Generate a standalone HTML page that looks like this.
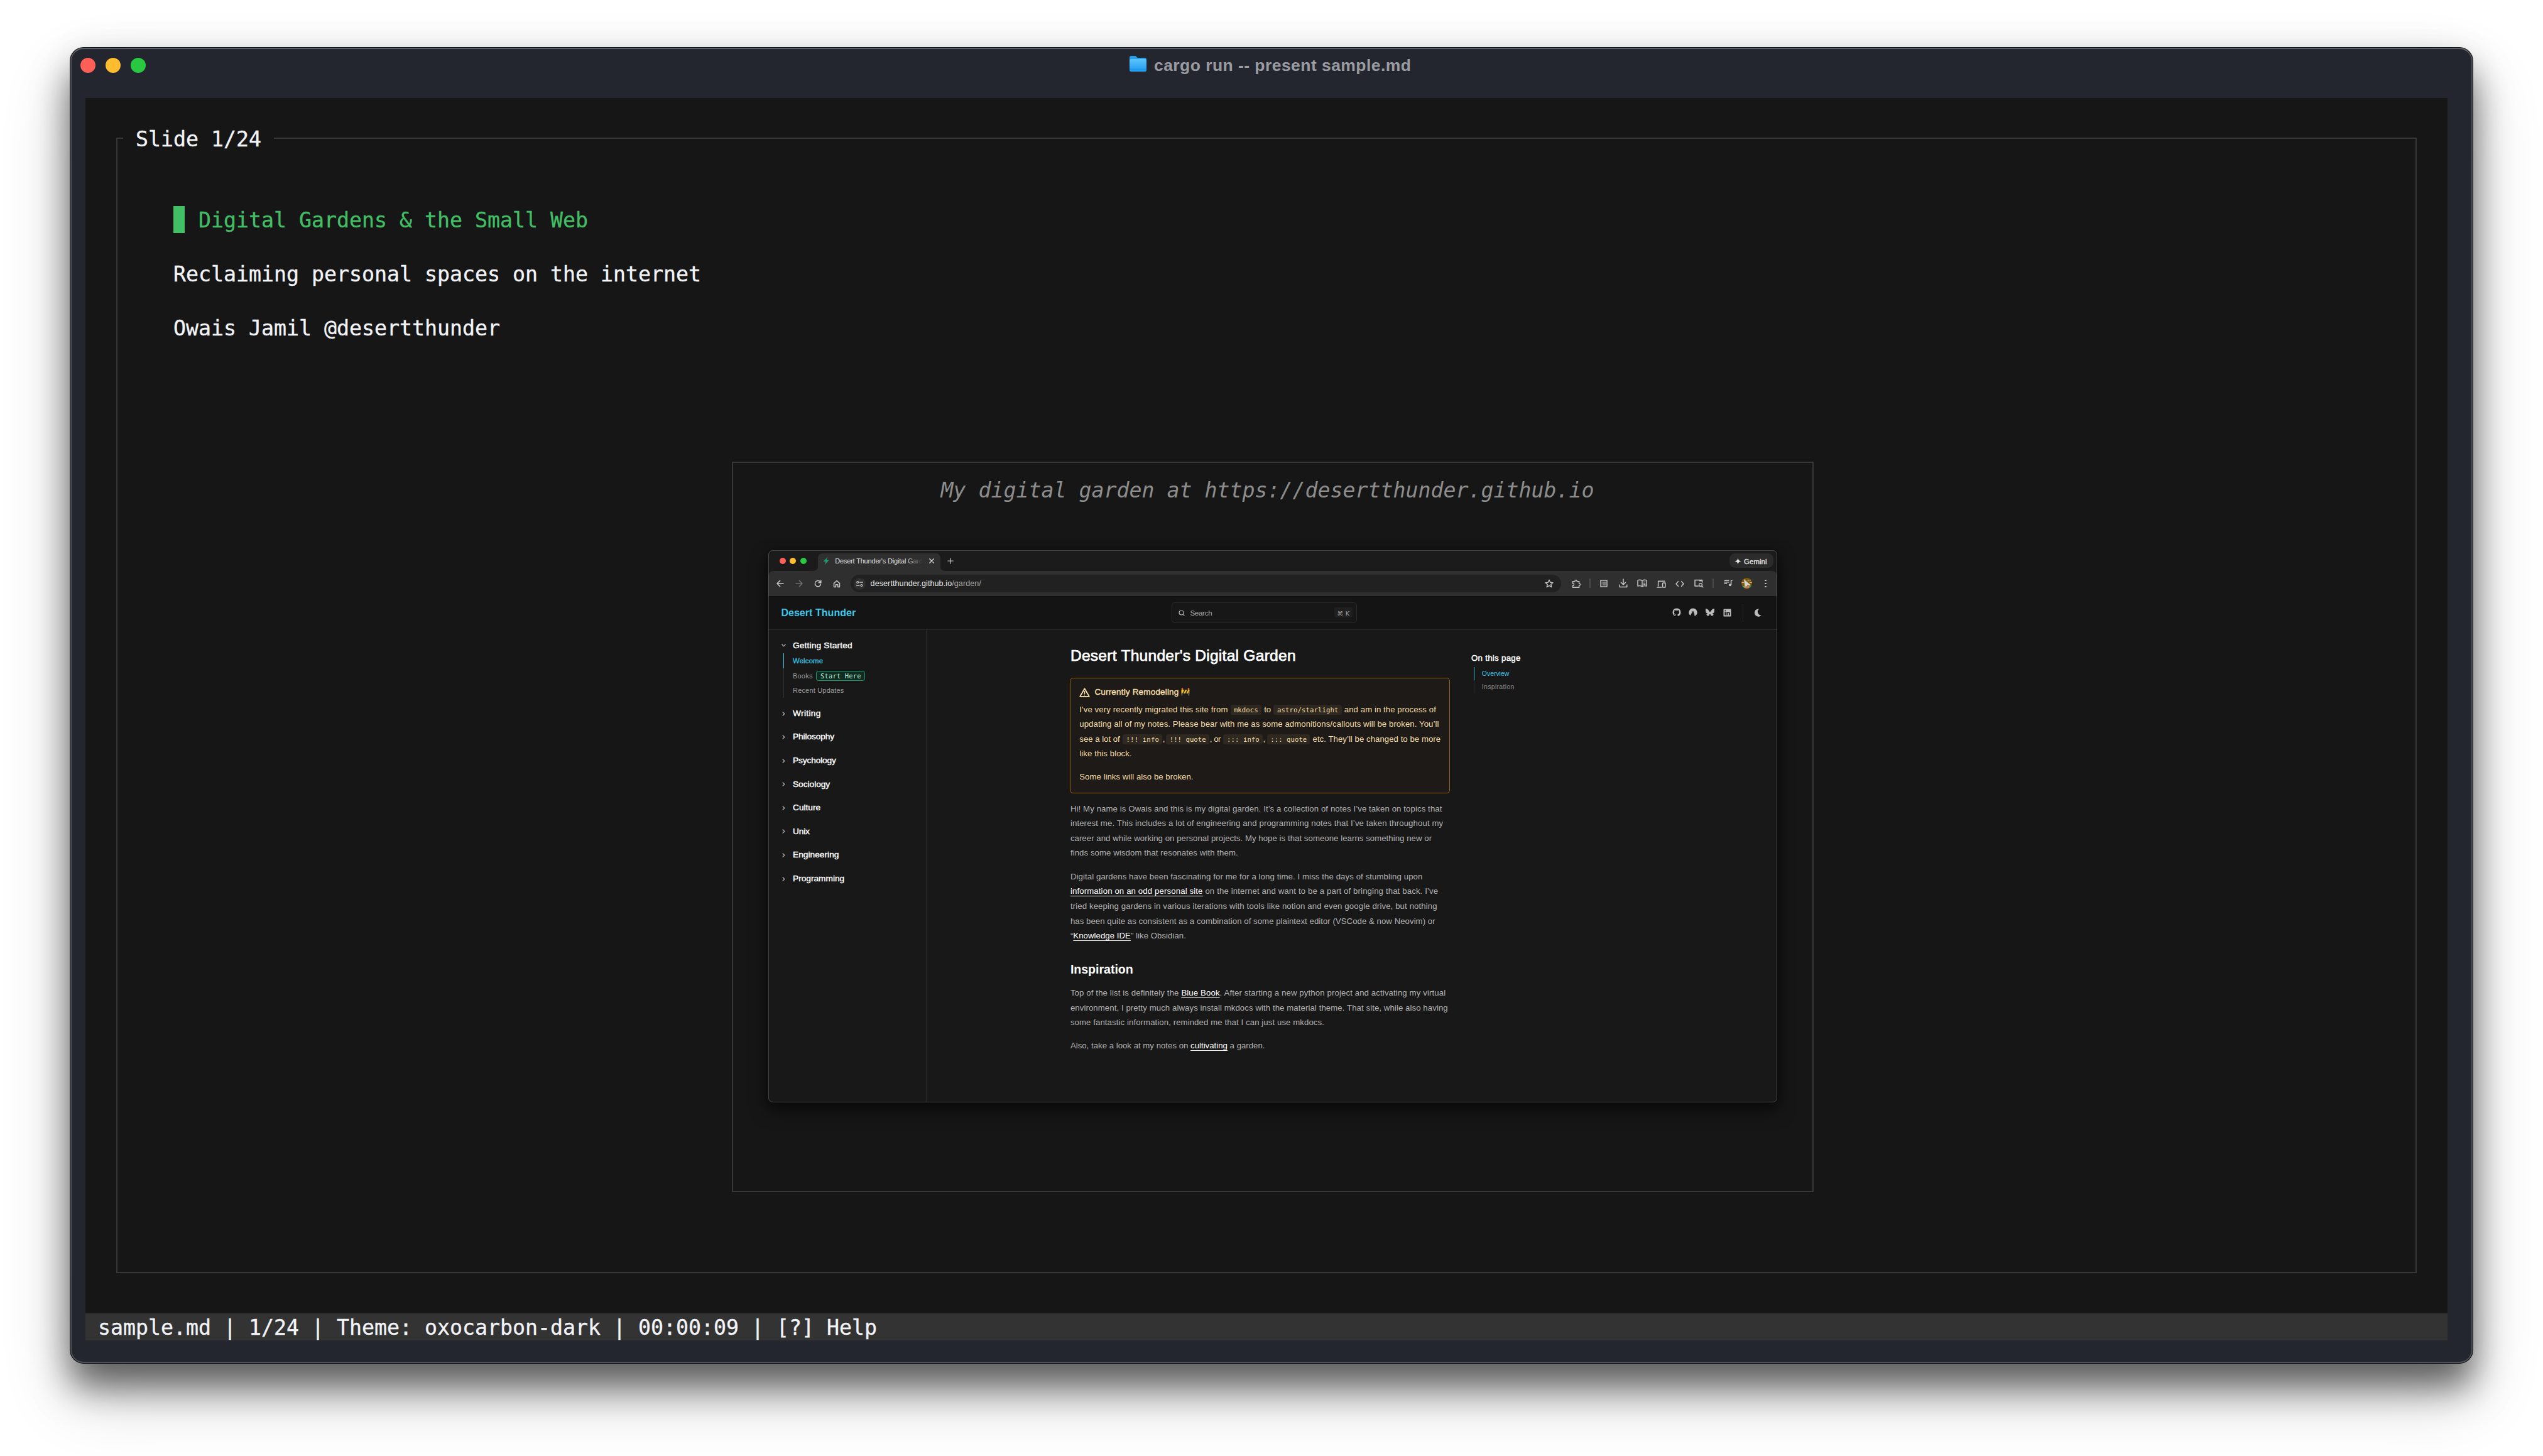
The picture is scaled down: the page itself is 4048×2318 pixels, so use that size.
<!DOCTYPE html>
<html lang="en"><head><meta charset="utf-8"><title>cargo run -- present sample.md</title>
<style>
html,body{margin:0;padding:0}
body{width:4048px;height:2318px;background:#fff;position:relative;overflow:hidden}
.m{position:absolute;font:400 33.22px/43px "DejaVu Sans Mono","Liberation Mono",monospace;white-space:pre;height:43px;margin-top:1px;-webkit-text-stroke:.35px currentColor}
.f{position:absolute;white-space:pre}
.a{position:absolute}
svg{position:absolute;overflow:visible}
</style></head><body>
<div class="a" style="left:112px;top:76px;width:3824px;height:2094px;border-radius:21px;background:#24262f;box-shadow:0 38px 56px rgba(0,0,0,.55),0 50px 110px rgba(0,0,0,.2),0 0 0 1px rgba(0,0,0,.95),0 0 60px rgba(0,0,0,.05);"></div>
<div class="a" style="left:112px;top:76px;width:3824px;height:2094px;border-radius:21px;box-sizing:border-box;border:2px solid rgba(255,255,255,.27);border-bottom-color:rgba(255,255,255,.2);border-left-color:rgba(255,255,255,.2);border-right-color:rgba(255,255,255,.2)"></div>
<div class="a" style="left:128px;top:92px;width:24px;height:24px;border-radius:50%;background:#fe5f57"></div>
<div class="a" style="left:168px;top:92px;width:24px;height:24px;border-radius:50%;background:#febc2e"></div>
<div class="a" style="left:208px;top:92px;width:24px;height:24px;border-radius:50%;background:#28c840"></div>
<svg style="left:1797px;top:88px" width="29" height="27" viewBox="0 0 29 27">
<defs><linearGradient id="fg" x1="0" y1="0" x2="0" y2="1"><stop offset="0" stop-color="#5cc4fb"/><stop offset="1" stop-color="#1e9bf0"/></linearGradient></defs>
<path d="M1 3.5Q1 1 3.5 1H9.5Q11 1 12 2.2L13.6 4H25.5Q28 4 28 6.5V9H1Z" fill="#2a9de8"/>
<rect x="1" y="6" width="27" height="20" rx="2.5" fill="url(#fg)"/>
<rect x="1" y="21.6" width="27" height="1" fill="#1787d6" opacity=".6"/>
</svg>
<div class="f" style="left:1837px;top:87.52px;font:700 26.5px/32px 'Liberation Sans',sans-serif;color:#9a9ba1;letter-spacing:0.444px;">cargo run -- present sample.md</div>
<div style="position:absolute;left:136px;top:156px;width:3760px;height:1978px;background:#161616;"></div>
<div style="position:absolute;left:185px;top:219px;width:2px;height:1808px;background:#373737;"></div>
<div style="position:absolute;left:3845px;top:219px;width:2px;height:1808px;background:#373737;"></div>
<div style="position:absolute;left:185px;top:2025px;width:3662px;height:2px;background:#373737;"></div>
<div style="position:absolute;left:185px;top:219px;width:11px;height:2px;background:#373737;"></div>
<div style="position:absolute;left:436px;top:219px;width:3411px;height:2px;background:#373737;"></div>
<div class="m" style="left:216px;top:199px;color:#f2f4f8;">Slide 1/24</div>
<div style="position:absolute;left:276px;top:328px;width:18px;height:43px;background:#42be65;"></div>
<div class="m" style="left:316px;top:328px;color:#42be65;">Digital Gardens &amp; the Small Web</div>
<div class="m" style="left:276px;top:414px;color:#f2f4f8;">Reclaiming personal spaces on the internet</div>
<div class="m" style="left:276px;top:500px;color:#f2f4f8;">Owais Jamil @desertthunder</div>
<div style="position:absolute;left:1165px;top:735px;width:1722px;height:2px;background:#373737;"></div>
<div style="position:absolute;left:1165px;top:1896px;width:1722px;height:2px;background:#373737;"></div>
<div style="position:absolute;left:1165px;top:735px;width:2px;height:1163px;background:#373737;"></div>
<div style="position:absolute;left:2885px;top:735px;width:2px;height:1163px;background:#373737;"></div>
<div class="m" style="left:1496px;top:758px;color:#8d8d8d;font-style:italic;-webkit-text-stroke:0;margin-left:1.5px">My digital garden at https://desertthunder.github.io</div>
<div style="position:absolute;left:136px;top:2091px;width:3760px;height:43px;background:#333333;"></div>
<div class="m" style="left:156px;top:2091px;color:#f2f4f8;">sample.md | 1/24 | Theme: oxocarbon-dark | 00:00:09 | [?] Help</div>
<div class="a" style="left:1223px;top:876px;width:1606px;height:879px;border-radius:7px;background:#181818;box-shadow:0 12px 28px rgba(0,0,0,.55),0 0 14px rgba(0,0,0,.35);overflow:hidden">
</div>
<div class="a" style="left:1223px;top:876px;width:1606px;height:879px;border-radius:7px;overflow:hidden">
<div class="a" style="left:0.0px;top:0.0px;width:1606.0px;height:34.0px;background:#1b1b1b;"></div>
<div class="a" style="left:0.0px;top:33.0px;width:1606.0px;height:40.0px;background:#2f2f2f;border-radius:8px 8px 0 0"></div>
<div class="a" style="left:0.0px;top:73.0px;width:1606.0px;height:53.0px;background:#141414;"></div>
<div class="a" style="left:0.0px;top:126.0px;width:1606.0px;height:1.0px;background:#2c2c2c;"></div>
<div class="a" style="left:251.0px;top:127.0px;width:1.0px;height:751.0px;background:#2a2a2a;"></div>
<div class="a" style="left:79.0px;top:5.0px;width:195.0px;height:29.0px;background:#2f2f2f;border-radius:7px 7px 0 0"></div>
<svg style="left:71px;top:25px" width="8" height="8" viewBox="0 0 8 8"><path d="M8 0V8H0Q8 8 8 0Z" fill="#2f2f2f"/></svg>
<svg style="left:274px;top:25px" width="8" height="8" viewBox="0 0 8 8"><path d="M0 0V8H8Q0 8 0 0Z" fill="#2f2f2f"/></svg>
<div class="a" style="left:17.8px;top:12.0px;width:10.0px;height:10.0px;background:#fe5f57;border-radius:50%"></div>
<div class="a" style="left:34.4px;top:12.0px;width:10.0px;height:10.0px;background:#febc2e;border-radius:50%"></div>
<div class="a" style="left:51.0px;top:12.0px;width:10.0px;height:10.0px;background:#28c840;border-radius:50%"></div>
<div class="a" style="left:131.0px;top:39.0px;width:1131.0px;height:28.0px;background:#212121;border-radius:14px"></div>
<div class="a" style="left:136.0px;top:43.5px;width:19.0px;height:19.0px;background:#2f2f2f;border-radius:50%"></div>
<div class="a" style="left:1530.0px;top:5.0px;width:70.0px;height:23.0px;background:#2b2b2b;border-radius:9px"></div>
<div class="a" style="left:642.0px;top:83.0px;width:295.0px;height:33.0px;background:#171717;border-radius:5px;box-sizing:border-box;border:1px solid #2b2b2b"></div>
<div class="a" style="left:901.0px;top:91.0px;width:28.5px;height:16.0px;background:#202020;border-radius:3px"></div>
<div class="a" style="left:1551.0px;top:85.0px;width:1.0px;height:29.0px;background:#2c2c2c;"></div>
<div class="a" style="left:24.0px;top:164.0px;width:1.0px;height:71.0px;background:#333;"></div>
<div class="a" style="left:23.5px;top:164.0px;width:1.5px;height:24.0px;background:#3ec6e8;"></div>
<div class="a" style="left:76.2px;top:192.0px;width:77.6px;height:15.8px;background:#0f2a21;border-radius:3.5px;box-sizing:border-box;border:1px solid #1f9d70"></div>
<div class="a" style="left:1123.0px;top:185.5px;width:1.0px;height:42.0px;background:#2c2c2c;"></div>
<div class="a" style="left:1122.6px;top:185.5px;width:1.4px;height:21.5px;background:#3ec6e8;"></div>
<div class="a" style="left:480.0px;top:203.0px;width:605.0px;height:183.5px;background:#1d1a17;border-radius:5px;box-sizing:border-box;border:1px solid #966309"></div>
<div class="a" style="left:735.9px;top:245.6px;width:49.1px;height:16.2px;background:#2e2820;border-radius:3.5px"></div>
<div class="a" style="left:804.3px;top:245.6px;width:108.3px;height:16.2px;background:#2e2820;border-radius:3.5px"></div>
<div class="a" style="left:564.0px;top:292.7px;width:62.9px;height:16.2px;background:#2e2820;border-radius:3.5px"></div>
<div class="a" style="left:633.2px;top:292.7px;width:68.7px;height:16.2px;background:#2e2820;border-radius:3.5px"></div>
<div class="a" style="left:724.3px;top:292.7px;width:62.4px;height:16.2px;background:#2e2820;border-radius:3.5px"></div>
<div class="a" style="left:793.5px;top:292.7px;width:68.7px;height:16.2px;background:#2e2820;border-radius:3.5px"></div>
</div>
<svg style="left:1309.0px;top:886.0px" width="12" height="14" viewBox="0 0 12 14" ><path d="M8.5 0.5L1.5 8H5.5L3.5 13.5L10.5 6H6.5Z" fill="#1c9c6b"/></svg>
<svg style="left:1479.2px;top:889.0px" width="8" height="8" viewBox="0 0 8 8" ><path d="M0.8 0.8L7.2 7.2M7.2 0.8L0.8 7.2" fill="none" stroke="#dcdcdc" stroke-width="1.3" stroke-linecap="round" stroke-linejoin="round"/></svg>
<svg style="left:1508.4px;top:888.0px" width="10" height="10" viewBox="0 0 10 10" ><path d="M5 0.8V9.2M0.8 5H9.2" fill="none" stroke="#d0d0d0" stroke-width="1.15" stroke-linecap="round" stroke-linejoin="round"/></svg>
<svg style="left:2760.5px;top:887.5px" width="11" height="11" viewBox="0 0 11 11" ><path d="M5.5 0Q5.8 5.2 11 5.5Q5.8 5.8 5.5 11Q5.2 5.8 0 5.5Q5.2 5.2 5.5 0Z" fill="#e6e6e6"/></svg>
<svg style="left:1235.9px;top:923.0px" width="12" height="12" viewBox="0 0 12 12" ><path d="M11 6H1.2M5.6 1.4L1 6L5.6 10.6" fill="none" stroke="#c7c7c7" stroke-width="1.5" stroke-linecap="round" stroke-linejoin="round"/></svg>
<svg style="left:1265.9px;top:923.0px" width="12" height="12" viewBox="0 0 12 12" ><path d="M1 6H10.8M6.4 1.4L11 6L6.4 10.6" fill="none" stroke="#6e6e6e" stroke-width="1.5" stroke-linecap="round" stroke-linejoin="round"/></svg>
<svg style="left:1295.9px;top:923.0px" width="12" height="12" viewBox="0 0 12 12" ><path d="M10.3 4.2A4.7 4.7 0 1 0 10.7 6.5" fill="none" stroke="#c7c7c7" stroke-width="1.5" stroke-linecap="round" stroke-linejoin="round"/><path d="M10.8 1V4.6H7.2" fill="none" stroke="#c7c7c7" stroke-width="1.5" stroke-linecap="round" stroke-linejoin="round"/></svg>
<svg style="left:1325.9px;top:922.5px" width="12" height="13" viewBox="0 0 12 13" ><path d="M1.5 5.6L6 1.5L10.5 5.6V11.5H7.6V7.8H4.4V11.5H1.5Z" fill="none" stroke="#c7c7c7" stroke-width="1.5" stroke-linecap="round" stroke-linejoin="round"/></svg>
<svg style="left:1362.9px;top:924.5px" width="11" height="9" viewBox="0 0 11 9" ><circle cx="2.2" cy="2" r="1.5" fill="none" stroke="#c7c7c7" stroke-width="1.2" stroke-linecap="round" stroke-linejoin="round"/><path d="M5.6 2H10.4M0.6 7H5" fill="none" stroke="#c7c7c7" stroke-width="1.3" stroke-linecap="round" stroke-linejoin="round"/><circle cx="8.4" cy="7" r="1.5" fill="none" stroke="#c7c7c7" stroke-width="1.2" stroke-linecap="round" stroke-linejoin="round"/></svg>
<svg style="left:2458.9px;top:921.5px" width="14" height="14" viewBox="0 0 14 14" ><path d="M7 1.2L8.8 5.2L13 5.6L9.8 8.5L10.8 12.7L7 10.4L3.2 12.7L4.2 8.5L1 5.6L5.2 5.2Z" fill="none" stroke="#c7c7c7" stroke-width="1.4" stroke-linecap="round" stroke-linejoin="round"/></svg>
<svg style="left:2501.6px;top:921.9px" width="14" height="14" viewBox="0 0 14 14" ><path d="M1.6 3.6H5Q4.9 1.4 6.6 1.4Q8.3 1.4 8.2 3.6H11.6V7Q13.4 6.9 13.4 8.5Q13.4 10.1 11.6 10V13.2H1.6V10.2Q3.5 10.3 3.5 8.6Q3.5 6.9 1.6 7Z" fill="none" stroke="#c7c7c7" stroke-width="1.4" stroke-linejoin="miter"/></svg>
<div class="a" style="left:2530px;top:921px;width:1.6px;height:15px;background:#4a4a4a"></div>
<svg style="left:2547.4px;top:922.9px" width="12" height="12" viewBox="0 0 12 12" ><rect x="1" y="1" width="10" height="10" fill="none" stroke="#c7c7c7" stroke-width="1.4"/><path d="M5.4 3.8H9M5.4 6H9M5.4 8.2H9" fill="none" stroke="#c7c7c7" stroke-width="1.2" stroke-linecap="round" stroke-linejoin="round"/><path d="M3 3.8H3.6M3 6H3.6M3 8.2H3.6" fill="none" stroke="#c7c7c7" stroke-width="1.2" stroke-linecap="round" stroke-linejoin="round"/></svg>
<svg style="left:2576.5px;top:921.2px" width="14" height="15" viewBox="0 0 14 15" ><path d="M7 1V9.6M3.4 6.2L7 9.8L10.6 6.2M1.2 10.2V13.6H12.8V10.2" fill="none" stroke="#c7c7c7" stroke-width="1.5" stroke-linecap="round" stroke-linejoin="round"/></svg>
<svg style="left:2606.0px;top:922.2px" width="16" height="13" viewBox="0 0 16 13" ><path d="M8 2.2Q5 0.6 1 1.6V11Q5 10 8 11.8Q11 10 15 11V1.6Q11 0.6 8 2.2ZM8 2.2V11.6" fill="none" stroke="#c7c7c7" stroke-width="1.4" stroke-linecap="round" stroke-linejoin="round"/><path d="M10.2 4.4H13M10.2 6.4H13M10.2 8.4H13" fill="none" stroke="#c7c7c7" stroke-width="1" stroke-linecap="round" stroke-linejoin="round"/></svg>
<svg style="left:2636.5px;top:923.5px" width="15" height="12" viewBox="0 0 15 12" ><path d="M2.6 9V1.2H13M0.8 11H8" fill="none" stroke="#c7c7c7" stroke-width="1.5" stroke-linecap="round" stroke-linejoin="round"/><rect x="9.6" y="4" width="4.4" height="7" rx="0.6" fill="none" stroke="#c7c7c7" stroke-width="1.4" stroke-linecap="round" stroke-linejoin="round"/></svg>
<svg style="left:2667.4px;top:924.5px" width="14" height="9" viewBox="0 0 14 9" ><path d="M4.4 0.8L1 4.5L4.4 8.2M9.6 0.8L13 4.5L9.6 8.2" fill="none" stroke="#c7c7c7" stroke-width="1.5" stroke-linecap="round" stroke-linejoin="round"/></svg>
<svg style="left:2697.1px;top:922.0px" width="15" height="14" viewBox="0 0 15 14" ><path d="M6.4 11H1V1.4H12.6V5" fill="none" stroke="#c7c7c7" stroke-width="1.5" stroke-linecap="round" stroke-linejoin="round"/><path d="M8 1.2H12.8V3.4H8Z" fill="#c7c7c7"/><circle cx="10" cy="9" r="2.4" fill="none" stroke="#c7c7c7" stroke-width="1.4" stroke-linecap="round" stroke-linejoin="round"/><path d="M11.8 10.8L13.8 12.8" fill="none" stroke="#c7c7c7" stroke-width="1.5" stroke-linecap="round" stroke-linejoin="round"/></svg>
<div class="a" style="left:2726.3px;top:921px;width:1.6px;height:15px;background:#4a4a4a"></div>
<svg style="left:2743.5px;top:923.4px" width="14" height="11" viewBox="0 0 14 11" ><path d="M0.6 1.2H8.4M0.6 3.7H8.4M0.6 6.2H5.2" fill="none" stroke="#c7c7c7" stroke-width="1.5"/><path d="M11.6 8V1H13.8" fill="none" stroke="#c7c7c7" stroke-width="1.5"/><circle cx="10" cy="8.2" r="2" fill="#c7c7c7"/></svg>
<svg style="left:2772.0px;top:920.1px" width="17" height="17" viewBox="0 0 17 17" ><defs><clipPath id="av"><circle cx="8.5" cy="8.5" r="8.5"/></clipPath></defs><g clip-path="url(#av)"><rect width="17" height="17" fill="#7a5a02"/><path d="M0 13H5V17H0ZM11 13.6H17V17H11Z" fill="#16b08a"/><rect x="4.6" y="13" width="7.6" height="4" fill="#e8742c"/><path d="M4.1 2L14.8 11.4L12.6 12.6L9.6 11.2L9 13.4H5.4Z" fill="#d2d2d2"/><rect x="7.2" y="13.6" width="2" height="1.4" fill="#1a8fe0"/><path d="M0.3 7H4.2V8H0.3ZM13 7H17V8H13ZM12 3.4H15V4.3H12Z" fill="#f2a3ac"/><rect x="10" y="3.2" width="1.2" height="2" fill="#fff"/></g></svg>
<div class="a" style="left:2809.3px;top:922.5px;width:2.4px;height:2.4px;border-radius:50%;background:#c7c7c7"></div>
<div class="a" style="left:2809.3px;top:927.5px;width:2.4px;height:2.4px;border-radius:50%;background:#c7c7c7"></div>
<div class="a" style="left:2809.3px;top:932.5px;width:2.4px;height:2.4px;border-radius:50%;background:#c7c7c7"></div>
<svg style="left:2661.5px;top:968.4px" width="14" height="14" viewBox="0 0 14 14" ><path d="M7 0.6A6.4 6.4 0 0 0 5 13.1C5.3 13.1 5.4 12.9 5.4 12.7V11.6C3.6 12 3.2 10.8 3.2 10.8C2.9 10.1 2.5 9.9 2.5 9.9C1.9 9.5 2.6 9.5 2.6 9.5C3.2 9.6 3.5 10.2 3.5 10.2C4.1 11.1 5 10.9 5.4 10.7C5.5 10.3 5.6 10 5.8 9.9C4.4 9.7 2.9 9.2 2.9 6.7C2.9 6 3.1 5.5 3.5 5C3.5 4.9 3.2 4.2 3.6 3.3C3.6 3.3 4.1 3.1 5.4 4A6 6 0 0 1 8.600000000000001 4C9.9 3.1 10.4 3.3 10.4 3.3C10.8 4.2 10.5 4.9 10.5 5C10.9 5.5 11.1 6 11.1 6.700000000000001C11.1 9.2 9.6 9.7 8.2 9.9C8.4 10.1 8.6 10.5 8.6 11V12.7C8.6 12.9 8.7 13.1 9 13.1A6.4 6.4 0 0 0 7 0.6Z" fill="#bdbdbd"/></svg>
<svg style="left:2688.4px;top:968.4px" width="14" height="14" viewBox="0 0 14 14" ><path d="M7 0.4A6.6 6.6 0 0 1 11.3 12L7 4.2L2.7 12A6.6 6.6 0 0 1 7 0.4Z" fill="#bdbdbd"/><path d="M7.6 4.6L11.6 11.8L9.6 13.2Z" fill="#bdbdbd" opacity=".75"/></svg>
<svg style="left:2715.2px;top:969.4px" width="14" height="12" viewBox="0 0 14 12" ><path d="M3.1 0.9C4.7 2.1 6.4 4.5 7 5.8C7.6 4.5 9.3 2.1 10.9 0.9C12.1 0 14 -0.6 14 1.5C14 1.9 13.8 5.1 13.6 5.6C13.2 7.200000000000001 11.6 7.6 10.2 7.4C12.7 7.8 13.3 9.2 11.9 10.6C9.3 13.2 8.200000000000001 9.9 7.9 9.1C7.8 8.9 7.8 8.9 7 8.9C6.2 8.9 6.2 8.9 6.1 9.1C5.8 9.9 4.7 13.2 2.1 10.6C0.7 9.2 1.3 7.8 3.8 7.4C2.4 7.6 0.8 7.2 0.4 5.6C0.2 5.1 0 1.9 0 1.5C0 -0.6 1.9 0 3.1 0.9Z" fill="#bdbdbd"/></svg>
<svg style="left:2742.8px;top:968.9px" width="13" height="13" viewBox="0 0 13 13" ><path d="M1.2 0.5H11.8Q12.5 0.5 12.5 1.2V11.8Q12.5 12.5 11.8 12.5H1.2Q0.5 12.5 0.5 11.8V1.2Q0.5 0.5 1.2 0.5ZM2.4 5.2V10.6H4.2V5.2ZM3.3 2.4A1 1 0 1 0 3.3 4.4A1 1 0 1 0 3.3 2.4ZM5.4 5.2V10.6H7.2V7.7C7.2 6.2 8.9 6.2 8.9 7.7V10.6H10.7V7.3C10.7 4.6 8 4.6 7.2 5.9V5.2Z" fill="#bdbdbd" fill-rule="evenodd"/></svg>
<svg style="left:2791.8px;top:969.4px" width="12" height="12" viewBox="0 0 12 12" ><path d="M8.2 0.6A6 6 0 1 0 11.6 10.4A5.4 5.4 0 0 1 8.2 0.6Z" fill="#bdbdbd"/></svg>
<svg style="left:1876.0px;top:970.6px" width="10" height="10" viewBox="0 0 10 10" ><circle cx="4.4" cy="4.4" r="3.4" fill="none" stroke="#b0b0b0" stroke-width="1.2" stroke-linecap="round" stroke-linejoin="round"/><path d="M7 7L9.2 9.2" fill="none" stroke="#b0b0b0" stroke-width="1.2" stroke-linecap="round" stroke-linejoin="round"/></svg>
<svg style="left:1244.3px;top:1025.3px" width="7" height="5" viewBox="0 0 7 5" ><path d="M0.8 1L3.5 3.8L6.2 1" fill="none" stroke="#b5b5b5" stroke-width="1.2" stroke-linecap="round" stroke-linejoin="round"/></svg>
<svg style="left:1245.3px;top:1132.7px" width="5" height="7" viewBox="0 0 5 7" ><path d="M1 0.8L3.8 3.5L1 6.2" fill="none" stroke="#b5b5b5" stroke-width="1.2" stroke-linecap="round" stroke-linejoin="round"/></svg>
<svg style="left:1245.3px;top:1170.2px" width="5" height="7" viewBox="0 0 5 7" ><path d="M1 0.8L3.8 3.5L1 6.2" fill="none" stroke="#b5b5b5" stroke-width="1.2" stroke-linecap="round" stroke-linejoin="round"/></svg>
<svg style="left:1245.3px;top:1207.6px" width="5" height="7" viewBox="0 0 5 7" ><path d="M1 0.8L3.8 3.5L1 6.2" fill="none" stroke="#b5b5b5" stroke-width="1.2" stroke-linecap="round" stroke-linejoin="round"/></svg>
<svg style="left:1245.3px;top:1245.4px" width="5" height="7" viewBox="0 0 5 7" ><path d="M1 0.8L3.8 3.5L1 6.2" fill="none" stroke="#b5b5b5" stroke-width="1.2" stroke-linecap="round" stroke-linejoin="round"/></svg>
<svg style="left:1245.3px;top:1282.9px" width="5" height="7" viewBox="0 0 5 7" ><path d="M1 0.8L3.8 3.5L1 6.2" fill="none" stroke="#b5b5b5" stroke-width="1.2" stroke-linecap="round" stroke-linejoin="round"/></svg>
<svg style="left:1245.3px;top:1320.3px" width="5" height="7" viewBox="0 0 5 7" ><path d="M1 0.8L3.8 3.5L1 6.2" fill="none" stroke="#b5b5b5" stroke-width="1.2" stroke-linecap="round" stroke-linejoin="round"/></svg>
<svg style="left:1245.3px;top:1358.1px" width="5" height="7" viewBox="0 0 5 7" ><path d="M1 0.8L3.8 3.5L1 6.2" fill="none" stroke="#b5b5b5" stroke-width="1.2" stroke-linecap="round" stroke-linejoin="round"/></svg>
<svg style="left:1245.3px;top:1395.9px" width="5" height="7" viewBox="0 0 5 7" ><path d="M1 0.8L3.8 3.5L1 6.2" fill="none" stroke="#b5b5b5" stroke-width="1.2" stroke-linecap="round" stroke-linejoin="round"/></svg>
<svg style="left:1718.2px;top:1094.5px" width="17" height="15" viewBox="0 0 17 15" ><path d="M8.5 1.2L15.8 13.8H1.2Z" fill="none" stroke="#f6dfa8" stroke-width="1.8" stroke-linecap="round" stroke-linejoin="round"/><path d="M8.5 5.8V9.2M8.5 11.4V11.6" fill="none" stroke="#f6dfa8" stroke-width="1.6" stroke-linecap="round" stroke-linejoin="round"/></svg>
<svg style="left:1879.8px;top:1095.0px" width="14" height="13" viewBox="0 0 14 13" ><path d="M0.5 3H13.5V9H0.5Z" fill="#f2c230"/><path d="M2 9L5 3H7L4 9ZM6.5 9L9.5 3H11.5L8.5 9ZM11 9L13.5 4V8L13 9Z" fill="#3a3222"/><path d="M1.5 9V12.5M12.5 9V12.5" stroke="#9a9a9a" stroke-width="1.2"/><circle cx="2" cy="1.8" r="1.4" fill="#f4772c"/><circle cx="12" cy="1.8" r="1.4" fill="#f4772c"/></svg>
<div class="f" style="left:1329.2px;top:886.99px;font:400 11px/13px 'Liberation Sans',sans-serif;color:#e2e2e2;letter-spacing:-0.185px;">Desert Thunder&#x27;s Digital Gard</div>
<div class="a" style="left:1440px;top:884px;width:34px;height:18px;background:linear-gradient(90deg,rgba(47,47,47,0),#2f2f2f 85%)"></div>
<div class="f" style="left:2776px;top:886.55px;font:400 11.4px/14px 'Liberation Sans',sans-serif;color:#e6e6e6;letter-spacing:0.101px;-webkit-text-stroke:.3px currentColor">Gemini</div>
<div class="f" style="left:1385.6px;top:922.17px;font:400 12.5px/15px 'Liberation Sans',sans-serif;color:#ececec;letter-spacing:0.105px;"><span style="color:#ececec">desertthunder.github.io</span><span style="color:#a8a8a8">/garden/</span></div>
<div class="f" style="left:1243.4px;top:966.46px;font:700 16px/19px 'Liberation Sans',sans-serif;color:#3ec6e8;letter-spacing:0.042px;">Desert Thunder</div>
<div class="f" style="left:1894.4px;top:969.32px;font:400 11.5px/14px 'Liberation Sans',sans-serif;color:#ababab;letter-spacing:-0.248px;">Search</div>
<div class="f" style="left:2128.5px;top:970.51px;font:400 9.5px/11px 'DejaVu Sans','Liberation Sans',sans-serif;color:#a5a5a5;letter-spacing:0.375px;">⌘ K</div>
<div class="f" style="left:1262px;top:1019.55px;font:400 13.7px/16px 'Liberation Sans',sans-serif;color:#ffffff;letter-spacing:0.18px;-webkit-text-stroke:.4px currentColor">Getting Started</div>
<div class="f" style="left:1262px;top:1044.54px;font:400 11.3px/14px 'Liberation Sans',sans-serif;color:#3ec6e8;letter-spacing:0.185px;-webkit-text-stroke:.3px currentColor">Welcome</div>
<div class="f" style="left:1262px;top:1069.85px;font:400 11px/13px 'Liberation Sans',sans-serif;color:#9c9c9c;letter-spacing:0.205px;">Books</div>
<div class="f" style="left:1306px;top:1070.46px;font:400 10.4px/12px 'DejaVu Sans Mono','Liberation Mono',monospace;color:#b9ecd4;letter-spacing:0.215px;">Start Here</div>
<div class="f" style="left:1262px;top:1093.35px;font:400 11px/13px 'Liberation Sans',sans-serif;color:#9c9c9c;letter-spacing:0.185px;">Recent Updates</div>
<div class="f" style="left:1262px;top:1127.95px;font:400 13.7px/16px 'Liberation Sans',sans-serif;color:#ffffff;letter-spacing:0.343px;-webkit-text-stroke:.4px currentColor">Writing</div>
<div class="f" style="left:1262px;top:1165.45px;font:400 13.7px/16px 'Liberation Sans',sans-serif;color:#ffffff;letter-spacing:-0.085px;-webkit-text-stroke:.4px currentColor">Philosophy</div>
<div class="f" style="left:1262px;top:1202.85px;font:400 13.7px/16px 'Liberation Sans',sans-serif;color:#ffffff;letter-spacing:-0.122px;-webkit-text-stroke:.4px currentColor">Psychology</div>
<div class="f" style="left:1262px;top:1240.65px;font:400 13.7px/16px 'Liberation Sans',sans-serif;color:#ffffff;letter-spacing:-0.02px;-webkit-text-stroke:.4px currentColor">Sociology</div>
<div class="f" style="left:1262px;top:1278.15px;font:400 13.7px/16px 'Liberation Sans',sans-serif;color:#ffffff;letter-spacing:-0.004px;-webkit-text-stroke:.4px currentColor">Culture</div>
<div class="f" style="left:1262px;top:1315.55px;font:400 13.7px/16px 'Liberation Sans',sans-serif;color:#ffffff;letter-spacing:-0.164px;-webkit-text-stroke:.4px currentColor">Unix</div>
<div class="f" style="left:1262px;top:1353.35px;font:400 13.7px/16px 'Liberation Sans',sans-serif;color:#ffffff;letter-spacing:0.034px;-webkit-text-stroke:.4px currentColor">Engineering</div>
<div class="f" style="left:1262px;top:1391.15px;font:400 13.7px/16px 'Liberation Sans',sans-serif;color:#ffffff;letter-spacing:0.004px;-webkit-text-stroke:.4px currentColor">Programming</div>
<div class="f" style="left:2341.9px;top:1039.69px;font:400 13.3px/16px 'Liberation Sans',sans-serif;color:#ffffff;letter-spacing:0.281px;-webkit-text-stroke:.4px currentColor">On this page</div>
<div class="f" style="left:2358.8px;top:1066.26px;font:400 10.5px/13px 'Liberation Sans',sans-serif;color:#3ec6e8;letter-spacing:-0.038px;">Overview</div>
<div class="f" style="left:2358.8px;top:1087.06px;font:400 10.5px/13px 'Liberation Sans',sans-serif;color:#8a8a8a;letter-spacing:0.315px;">Inspiration</div>
<div class="f" style="left:1703.9px;top:1029.18px;font:400 24.6px/30px 'Liberation Sans',sans-serif;color:#ffffff;letter-spacing:0.241px;-webkit-text-stroke:.75px currentColor">Desert Thunder&#x27;s Digital Garden</div>
<div class="f" style="left:1742.4px;top:1093.82px;font:400 13.5px/16px 'Liberation Sans',sans-serif;color:#f6dfa8;letter-spacing:0.176px;-webkit-text-stroke:.4px currentColor">Currently Remodeling</div>
<div class="f" style="left:1718.3px;top:1121.53px;font:400 13.2px/16px 'Liberation Sans',sans-serif;color:#f6dfa8;letter-spacing:0.102px;">I&#x27;ve very recently migrated this site from</div>
<div class="f" style="left:1963.9px;top:1123.73px;font:400 10.6px/13px 'DejaVu Sans Mono','Liberation Mono',monospace;color:#f6dfa8;letter-spacing:0.104px;">mkdocs</div>
<div class="f" style="left:2012.2px;top:1121.53px;font:400 13.2px/16px 'Liberation Sans',sans-serif;color:#f6dfa8;letter-spacing:-0.1px;">to</div>
<div class="f" style="left:2033.1px;top:1123.73px;font:400 10.6px/13px 'DejaVu Sans Mono','Liberation Mono',monospace;color:#f6dfa8;letter-spacing:0.123px;">astro/starlight</div>
<div class="f" style="left:2139.8px;top:1121.53px;font:400 13.2px/16px 'Liberation Sans',sans-serif;color:#f6dfa8;letter-spacing:0.069px;">and am in the process of</div>
<div class="f" style="left:1718.3px;top:1144.83px;font:400 13.2px/16px 'Liberation Sans',sans-serif;color:#f6dfa8;letter-spacing:0.072px;">updating all of my notes. Please bear with me as some admonitions/callouts will be broken. You’ll</div>
<div class="f" style="left:1718.3px;top:1168.53px;font:400 13.2px/16px 'Liberation Sans',sans-serif;color:#f6dfa8;letter-spacing:-0.011px;">see a lot of</div>
<div class="f" style="left:1792.5px;top:1170.73px;font:400 10.6px/13px 'DejaVu Sans Mono','Liberation Mono',monospace;color:#f6dfa8;letter-spacing:0.196px;">!!! info</div>
<div class="f" style="left:1850.8px;top:1168.53px;font:400 13.2px/16px 'Liberation Sans',sans-serif;color:#f6dfa8;letter-spacing:-0.972px;">,</div>
<div class="f" style="left:1861.7px;top:1170.73px;font:400 10.6px/13px 'DejaVu Sans Mono','Liberation Mono',monospace;color:#f6dfa8;letter-spacing:0.062px;">!!! quote</div>
<div class="f" style="left:1925.8px;top:1168.53px;font:400 13.2px/16px 'Liberation Sans',sans-serif;color:#f6dfa8;letter-spacing:-0.454px;">, or</div>
<div class="f" style="left:1953.1px;top:1170.73px;font:400 10.6px/13px 'DejaVu Sans Mono','Liberation Mono',monospace;color:#f6dfa8;letter-spacing:0.081px;">::: info</div>
<div class="f" style="left:2010.6px;top:1168.53px;font:400 13.2px/16px 'Liberation Sans',sans-serif;color:#f6dfa8;letter-spacing:-0.972px;">,</div>
<div class="f" style="left:2022.3px;top:1170.73px;font:400 10.6px/13px 'DejaVu Sans Mono','Liberation Mono',monospace;color:#f6dfa8;letter-spacing:0.062px;">::: quote</div>
<div class="f" style="left:2089.5px;top:1168.53px;font:400 13.2px/16px 'Liberation Sans',sans-serif;color:#f6dfa8;letter-spacing:0.046px;">etc. They’ll be changed to be more</div>
<div class="f" style="left:1718.3px;top:1191.73px;font:400 13.2px/16px 'Liberation Sans',sans-serif;color:#f6dfa8;letter-spacing:0.08px;">like this block.</div>
<div class="f" style="left:1718.3px;top:1228.53px;font:400 13.2px/16px 'Liberation Sans',sans-serif;color:#f6dfa8;letter-spacing:0.03px;">Some links will also be broken.</div>
<div class="f" style="left:1703.9px;top:1279.73px;font:400 13.2px/16px 'Liberation Sans',sans-serif;color:#b3b3b3;letter-spacing:0.102px;">Hi! My name is Owais and this is my digital garden. It’s a collection of notes I’ve taken on topics that</div>
<div class="f" style="left:1703.9px;top:1303.23px;font:400 13.2px/16px 'Liberation Sans',sans-serif;color:#b3b3b3;letter-spacing:0.117px;">interest me. This includes a lot of engineering and programming notes that I’ve taken throughout my</div>
<div class="f" style="left:1703.9px;top:1326.63px;font:400 13.2px/16px 'Liberation Sans',sans-serif;color:#b3b3b3;letter-spacing:0.052px;">career and while working on personal projects. My hope is that someone learns something new or</div>
<div class="f" style="left:1703.9px;top:1350.33px;font:400 13.2px/16px 'Liberation Sans',sans-serif;color:#b3b3b3;letter-spacing:0.087px;">finds some wisdom that resonates with them.</div>
<div class="f" style="left:1703.9px;top:1388.03px;font:400 13.2px/16px 'Liberation Sans',sans-serif;color:#b3b3b3;letter-spacing:0.098px;">Digital gardens have been fascinating for me for a long time. I miss the days of stumbling upon</div>
<div class="f" style="left:1703.9px;top:1411.43px;font:400 13.2px/16px 'Liberation Sans',sans-serif;color:#b3b3b3;letter-spacing:0.134px;"><span style="color:#fff;text-decoration:underline;text-decoration-thickness:1px;text-underline-offset:3px">information on an odd personal site</span> on the internet and want to be a part of bringing that back. I’ve</div>
<div class="f" style="left:1703.9px;top:1435.13px;font:400 13.2px/16px 'Liberation Sans',sans-serif;color:#b3b3b3;letter-spacing:0.119px;">tried keeping gardens in various iterations with tools like notion and even google drive, but nothing</div>
<div class="f" style="left:1703.9px;top:1458.53px;font:400 13.2px/16px 'Liberation Sans',sans-serif;color:#b3b3b3;letter-spacing:0.048px;">has been quite as consistent as a combination of some plaintext editor (VSCode &amp; now Neovim) or</div>
<div class="f" style="left:1703.9px;top:1481.93px;font:400 13.2px/16px 'Liberation Sans',sans-serif;color:#b3b3b3;letter-spacing:0.05px;">“<span style="color:#fff;text-decoration:underline;text-decoration-thickness:1px;text-underline-offset:3px">Knowledge IDE</span>” like Obsidian.</div>
<div class="f" style="left:1703.9px;top:1531.11px;font:700 19.6px/24px 'Liberation Sans',sans-serif;color:#ffffff;letter-spacing:-0.026px;">Inspiration</div>
<div class="f" style="left:1703.9px;top:1573.03px;font:400 13.2px/16px 'Liberation Sans',sans-serif;color:#b3b3b3;letter-spacing:0.124px;">Top of the list is definitely the <span style="color:#fff;text-decoration:underline;text-decoration-thickness:1px;text-underline-offset:3px">Blue Book</span>. After starting a new python project and activating my virtual</div>
<div class="f" style="left:1703.9px;top:1596.73px;font:400 13.2px/16px 'Liberation Sans',sans-serif;color:#b3b3b3;letter-spacing:0.087px;">environment, I pretty much always install mkdocs with the material theme. That site, while also having</div>
<div class="f" style="left:1703.9px;top:1620.13px;font:400 13.2px/16px 'Liberation Sans',sans-serif;color:#b3b3b3;letter-spacing:0.091px;">some fantastic information, reminded me that I can just use mkdocs.</div>
<div class="f" style="left:1703.9px;top:1657.13px;font:400 13.2px/16px 'Liberation Sans',sans-serif;color:#b3b3b3;letter-spacing:0.018px;">Also, take a look at my notes on <span style="color:#fff;text-decoration:underline;text-decoration-thickness:1px;text-underline-offset:3px">cultivating</span> a garden.</div>
<div class="a" style="left:1223px;top:876px;width:1606px;height:879px;border-radius:7px;box-sizing:border-box;border:1px solid rgba(255,255,255,.2)"></div>
</body></html>
